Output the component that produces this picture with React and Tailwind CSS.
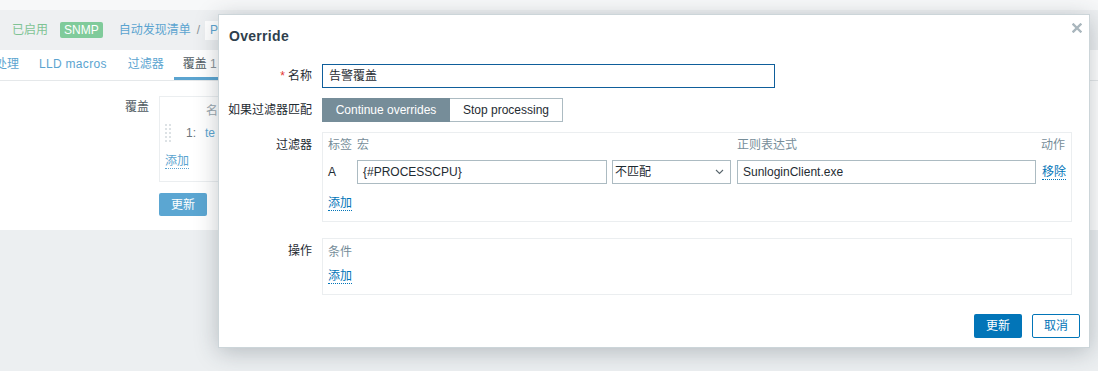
import React from 'react';

const font = "font-['Liberation_Sans','Noto_Sans_CJK_SC',sans-serif]";

function Link({ children, className = '' }) {
    return (
        <span className={`text-[#0275b8] border-b border-dotted border-[#0275b8] leading-[14px] ${className}`}>
            {children}
        </span>
    );
}

function Field({ value, className = '' }) {
    return (
        <div className={`h-[24px] border border-[#acbbc2] bg-white px-[5px] flex items-center text-[#1f2c33] ${className}`}>
            {value}
        </div>
    );
}

export default function App() {
    return (
        <div className={`relative w-[1098px] h-[371px] overflow-hidden bg-[#eceff1] text-[12px] ${font}`}>
            {/* Página de fondo */}
            <div className="h-[10px] bg-[#f7f8f9]" />
            <div className="h-[40px] bg-[#eef0f2] flex items-center pl-[12px]">
                <span className="text-[#7fc394]">已启用</span>
                <span className="ml-[12px] bg-[#80cb9b] text-white px-[4px] h-[16px] leading-[16px] rounded-[2px]">SNMP</span>
                <span className="ml-[16px] text-[#5ba4d0]">自动发现清单</span>
                <span className="ml-[6px] text-[#8a9499]">/</span>
                <span className="ml-[5px] bg-white h-[19px] px-[5px] leading-[19px] text-[#5ba4d0]">Pr</span>
            </div>
            <div className="h-[31px] bg-white border-b border-[#e5e8ea] flex items-end">
                <span className="-ml-[5px] pb-[7px] text-[#5ba4d0]">处理</span>
                <span className="ml-[20px] pb-[7px] text-[#5ba4d0] tracking-[0.3px]">LLD macros</span>
                <span className="ml-[21px] pb-[7px] text-[#5ba4d0]">过滤器</span>
                <span className="ml-[10px] px-[9px] pb-[4px] border-b-[3px] border-[#5ba4d0] text-[#4f5b62]">
                    覆盖 <span className="text-[#8a9499]">1</span>
                </span>
            </div>
            <div className="h-[149px] bg-white flex pt-[15px]">
                <div className="w-[149px] text-right text-[#4f5b62] pt-[2px]">覆盖</div>
                <div className="ml-[10px]">
                    <div className="w-[80px] h-[86px] border border-[#ebeef0] pl-[5px] pt-[5px]">
                        <div className="pl-[41px] text-[#9aa7ae] h-[18px]">名</div>
                        <div className="flex items-center h-[22px] mt-[2px]">
                            <div className="grid grid-cols-2 gap-x-[2px] gap-y-[2px] w-[6px]">
                                {Array.from({ length: 10 }).map((_, i) => (
                                    <span key={i} className="w-[2px] h-[2px] bg-[#dde2e5]" />
                                ))}
                            </div>
                            <span className="ml-[15px] text-[#6b767c]">1:</span>
                            <span className="ml-[9px] text-[#5ba4d0]">te</span>
                        </div>
                        <div className="mt-[8px]">
                            <span className="text-[#5ba4d0] border-b border-dotted border-[#5ba4d0]">添加</span>
                        </div>
                    </div>
                    <div className="mt-[11px] w-[48px] h-[23px] bg-[#5ba6d2] text-white flex items-center justify-center rounded-[2px]">更新</div>
                </div>
            </div>

            {/* Override modal */}
            <div className="absolute left-[218px] top-[14px] w-[872px] h-[334px] bg-white border border-[#ccd5d9] shadow-[0_4px_22px_rgba(40,55,65,0.28)] text-[#1f2c33]">
                <div className="h-[44px] flex items-center pl-[10px] pb-[1px]">
                    <span className="text-[14px] font-bold text-[#2f3f4d] tracking-[0.3px]">Override</span>
                </div>
                <svg className="absolute right-[7px] top-[8px]" width="10" height="10" viewBox="0 0 10 10">
                    <path d="M1.5 1.5 L8.5 8.5 M8.5 1.5 L1.5 8.5" stroke="#a9b6bd" strokeWidth="2.4" strokeLinecap="square" />
                </svg>

                <div className="flex flex-col">
                    {/* 名称 */}
                    <div className="flex items-center mt-[5px]">
                        <div className="w-[93px] text-right">
                            <span className="text-[#e33734] mr-[3px]">*</span>名称
                        </div>
                        <div className="ml-[10px] w-[453px] h-[24px] border border-[#0f5e9b] px-[6px] flex items-center">告警覆盖</div>
                    </div>

                    {/* 如果过滤器匹配 */}
                    <div className="flex items-center mt-[10px]">
                        <div className="w-[93px] text-right">如果过滤器匹配</div>
                        <div className="ml-[10px] flex h-[24px]">
                            <div className="w-[128px] bg-[#768d99] border border-[#768d99] text-white flex items-center justify-center">Continue overrides</div>
                            <div className="w-[113px] border border-l-0 border-[#acbbc2] flex items-center justify-center">Stop processing</div>
                        </div>
                    </div>

                    {/* 过滤器 */}
                    <div className="flex mt-[10px]">
                        <div className="w-[93px] text-right pt-[4px]">过滤器</div>
                        <div className="ml-[10px] w-[750px] h-[90px] border border-[#ebeef0] px-[5px] pt-[4px]">
                            <div className="flex text-[#768d99] h-[16px] leading-[16px]">
                                <span className="w-[29px]">标签</span>
                                <span className="w-[380px]">宏</span>
                                <span className="w-[304px]">正则表达式</span>
                                <span>动作</span>
                            </div>
                            <div className="flex items-center mt-[7px]">
                                <span className="w-[29px]">A</span>
                                <Field value="{#PROCESSCPU}" className="w-[250px]" />
                                <div className="ml-[5px] w-[119px] h-[24px] border border-[#acbbc2] flex items-center justify-between pl-[2px] pr-[6px]">
                                    <span>不匹配</span>
                                    <svg width="9" height="6" viewBox="0 0 9 6">
                                        <path d="M1 1 L4.5 4.5 L8 1" fill="none" stroke="#59666d" strokeWidth="1.1" />
                                    </svg>
                                </div>
                                <Field value="SunloginClient.exe" className="ml-[6px] w-[299px]" />
                                <Link className="ml-[6px]">移除</Link>
                            </div>
                            <div className="mt-[10px]">
                                <Link>添加</Link>
                            </div>
                        </div>
                    </div>

                    {/* 操作 */}
                    <div className="flex mt-[16px]">
                        <div className="w-[93px] text-right pt-[4px]">操作</div>
                        <div className="ml-[10px] w-[750px] h-[57px] border border-[#ebeef0] px-[5px] pt-[5px]">
                            <div className="text-[#768d99] h-[16px] leading-[16px]">条件</div>
                            <div className="mt-[7px]">
                                <Link>添加</Link>
                            </div>
                        </div>
                    </div>

                    {/* Botones */}
                    <div className="flex justify-end gap-[10px] pr-[9px] mt-[19px]">
                        <div className="w-[48px] h-[24px] bg-[#0275b8] text-white flex items-center justify-center rounded-[2px]">更新</div>
                        <div className="w-[48px] h-[24px] border border-[#0275b8] text-[#0275b8] flex items-center justify-center rounded-[2px]">取消</div>
                    </div>
                </div>
            </div>
        </div>
    );
}
